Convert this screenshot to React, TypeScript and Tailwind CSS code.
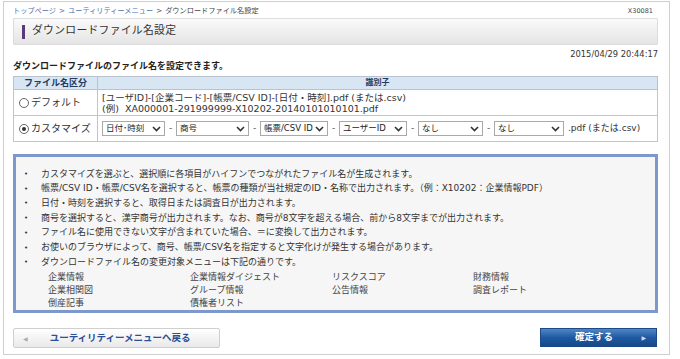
import React from 'react'

const FONT = { fontFamily: '"DejaVu Sans", "Noto Sans CJK JP", sans-serif' }

function Chevron() {
  return (
    <svg width="9" height="6" viewBox="0 0 9 6" className="shrink-0">
      <polyline points="1,1 4.5,4.5 8,1" fill="none" stroke="#333" strokeWidth="1.6" />
    </svg>
  )
}

function FakeSelect({ label, width }: { label: string; width: string }) {
  return (
    <div
      className={`${width} h-[15px] flex items-center justify-between border border-[#a9a9a9] bg-white pl-[3px] pr-[3px] text-[8.5px] text-[#222]`}
    >
      <span className="whitespace-nowrap">{label}</span>
      <Chevron />
    </div>
  )
}

function Dash() {
  return <span className="text-[9px] text-[#555] w-[11px] text-center">-</span>
}

function Radio({ checked }: { checked?: boolean }) {
  return (
    <span className="inline-flex w-[10px] h-[10px] rounded-full border border-[#666] items-center justify-center mr-[2px]">
      {checked && <span className="w-[4px] h-[4px] rounded-full bg-[#333]" />}
    </span>
  )
}

const notes = [
  'カスタマイズを選ぶと、選択順に各項目がハイフンでつながれたファイル名が生成されます。',
  '帳票/CSV ID・帳票/CSV名を選択すると、帳票の種類が当社規定のID・名称で出力されます。（例：X10202：企業情報PDF）',
  '日付・時刻を選択すると、取得日または調査日が出力されます。',
  '商号を選択すると、漢字商号が出力されます。なお、商号が8文字を超える場合、前から8文字までが出力されます。',
  'ファイル名に使用できない文字が含まれていた場合、＝に変換して出力されます。',
  'お使いのブラウザによって、商号、帳票/CSV名を指定すると文字化けが発生する場合があります。',
  'ダウンロードファイル名の変更対象メニューは下記の通りです。',
]

const menus = [
  '企業情報', '企業情報ダイジェスト', 'リスクスコア', '財務情報',
  '企業相関図', 'グループ情報', '公告情報', '調査レポート',
  '倒産記事', '債権者リスト',
]

export default function App() {
  return (
    <div className="w-[680px] h-[359px] bg-white overflow-hidden" style={FONT}>
      <div className="ml-[3px] mt-[1px] w-[667px] h-[354px] border border-[#cfcfcf] pl-[9px] pr-[11px] pt-[4px]">
        {/* breadcrumb */}
        <div className="h-[11px] flex items-center justify-between text-[7.2px]">
          <div className="flex items-center gap-[3px]">
            <span className="text-[#4d72ae]">トップページ</span>
            <span className="text-[#4d72ae]">&gt;</span>
            <span className="text-[#4d72ae]">ユーティリティーメニュー</span>
            <span className="text-[#555]">&gt;</span>
            <span className="text-[#444]">ダウンロードファイル名設定</span>
          </div>
          <span className="text-[6.5px] text-[#444] mr-[5px]">X30081</span>
        </div>

        {/* title bar */}
        <div className="mt-[1px] h-[27px] flex items-center border border-[#dcdcdc] bg-gradient-to-b from-[#fafafa] via-[#efefef] to-[#e4e4e4] rounded-[1px]">
          <span className="ml-[8px] w-[3px] h-[14px] bg-[#5b3a78]" />
          <span className="ml-[7px] text-[10.8px] tracking-[0.3px] text-[#333]">ダウンロードファイル名設定</span>
        </div>

        {/* date */}
        <div className="mt-[4px] h-[10px] flex justify-end text-[8.3px] text-[#333] leading-[10px]">2015/04/29 20:44:17</div>

        {/* description */}
        <div className="mt-[1px] text-[9px] font-bold text-[#222] leading-[12px]">ダウンロードファイルのファイル名を設定できます。</div>

        {/* table */}
        <table className="mt-[4px] w-full border-collapse text-[#333]">
          <thead>
            <tr className="h-[13px] bg-[#d8e6f4]">
              <th className="w-[84px] border border-[#b9c3cf] text-[9px] font-bold text-[#243a60] leading-[12px]">ファイル名区分</th>
              <th className="border border-[#b9c3cf] text-[8px] font-bold text-[#243a60] leading-[12px]">識別子</th>
            </tr>
          </thead>
          <tbody>
            <tr className="h-[26px]">
              <td className="border border-[#c4c4c4] pl-[5px] text-[10px]">
                <span className="flex items-center"><Radio />デフォルト</span>
              </td>
              <td className="border border-[#c4c4c4] pl-[4px] text-[9.5px] leading-[11px]">
                <div>[ユーザID]-[企業コード]-[帳票/CSV ID]-[日付・時刻].pdf (または.csv)</div>
                <div>(例)&nbsp;&nbsp;XA000001-291999999-X10202-20140101010101.pdf</div>
              </td>
            </tr>
            <tr className="h-[26px]">
              <td className="border border-[#c4c4c4] pl-[5px] text-[10px]">
                <span className="flex items-center"><Radio checked />カスタマイズ</span>
              </td>
              <td className="border border-[#c4c4c4] pl-[4px]">
                <div className="flex items-center">
                  <FakeSelect label="日付･時刻" width="w-[63px]" />
                  <Dash />
                  <FakeSelect label="商号" width="w-[73px]" />
                  <Dash />
                  <FakeSelect label="帳票/CSV ID" width="w-[68px]" />
                  <Dash />
                  <FakeSelect label="ユーザーID" width="w-[68px]" />
                  <Dash />
                  <FakeSelect label="なし" width="w-[65px]" />
                  <Dash />
                  <FakeSelect label="なし" width="w-[70px]" />
                  <span className="ml-[4px] text-[9px] text-[#333] whitespace-nowrap">.pdf (または.csv)</span>
                </div>
              </td>
            </tr>
          </tbody>
        </table>

        {/* info box */}
        <div className="mt-[12px] h-[159px] border-[3px] border-[#7d98cb] bg-[#f6f6f6] pt-[10px]">
          <ul className="text-[9px] text-[#333]">
            {notes.map((n) => (
              <li key={n} className="flex items-center h-[14.7px]">
                <span className="w-[25px] pl-[8px] text-[7px]">•</span>
                <span className="whitespace-nowrap">{n}</span>
              </li>
            ))}
          </ul>
          <div className="grid grid-cols-[142px_142px_141px_1fr] auto-rows-[13px] items-center pl-[32px] pt-[1px] text-[9px] text-[#444]">
            {menus.map((m) => (
              <span key={m} className="leading-[13px]">{m}</span>
            ))}
          </div>
        </div>

        {/* buttons */}
        <div className="mt-[15px] flex justify-between pr-[1px]">
          <div className="w-[207px] h-[20px] flex items-center border border-[#cfcfcf] rounded-[2px] bg-gradient-to-b from-[#ffffff] to-[#e9e9e9]">
            <span className="ml-[9px] text-[6px] text-[#aab]">◀</span>
            <span className="ml-[22px] text-[9.5px] font-bold text-[#2c4f97]">ユーティリティーメニューへ戻る</span>
          </div>
          <div className="w-[117px] h-[19px] flex items-center justify-between bg-gradient-to-b from-[#4f86c6] via-[#1e5aa3] to-[#164886] border border-[#1b4a86]">
            <span className="ml-[34px] text-[9.5px] font-bold text-white">確定する</span>
            <span className="mr-[10px] text-[6px] text-[#c9dbf2]">▶</span>
          </div>
        </div>
      </div>
    </div>
  )
}
